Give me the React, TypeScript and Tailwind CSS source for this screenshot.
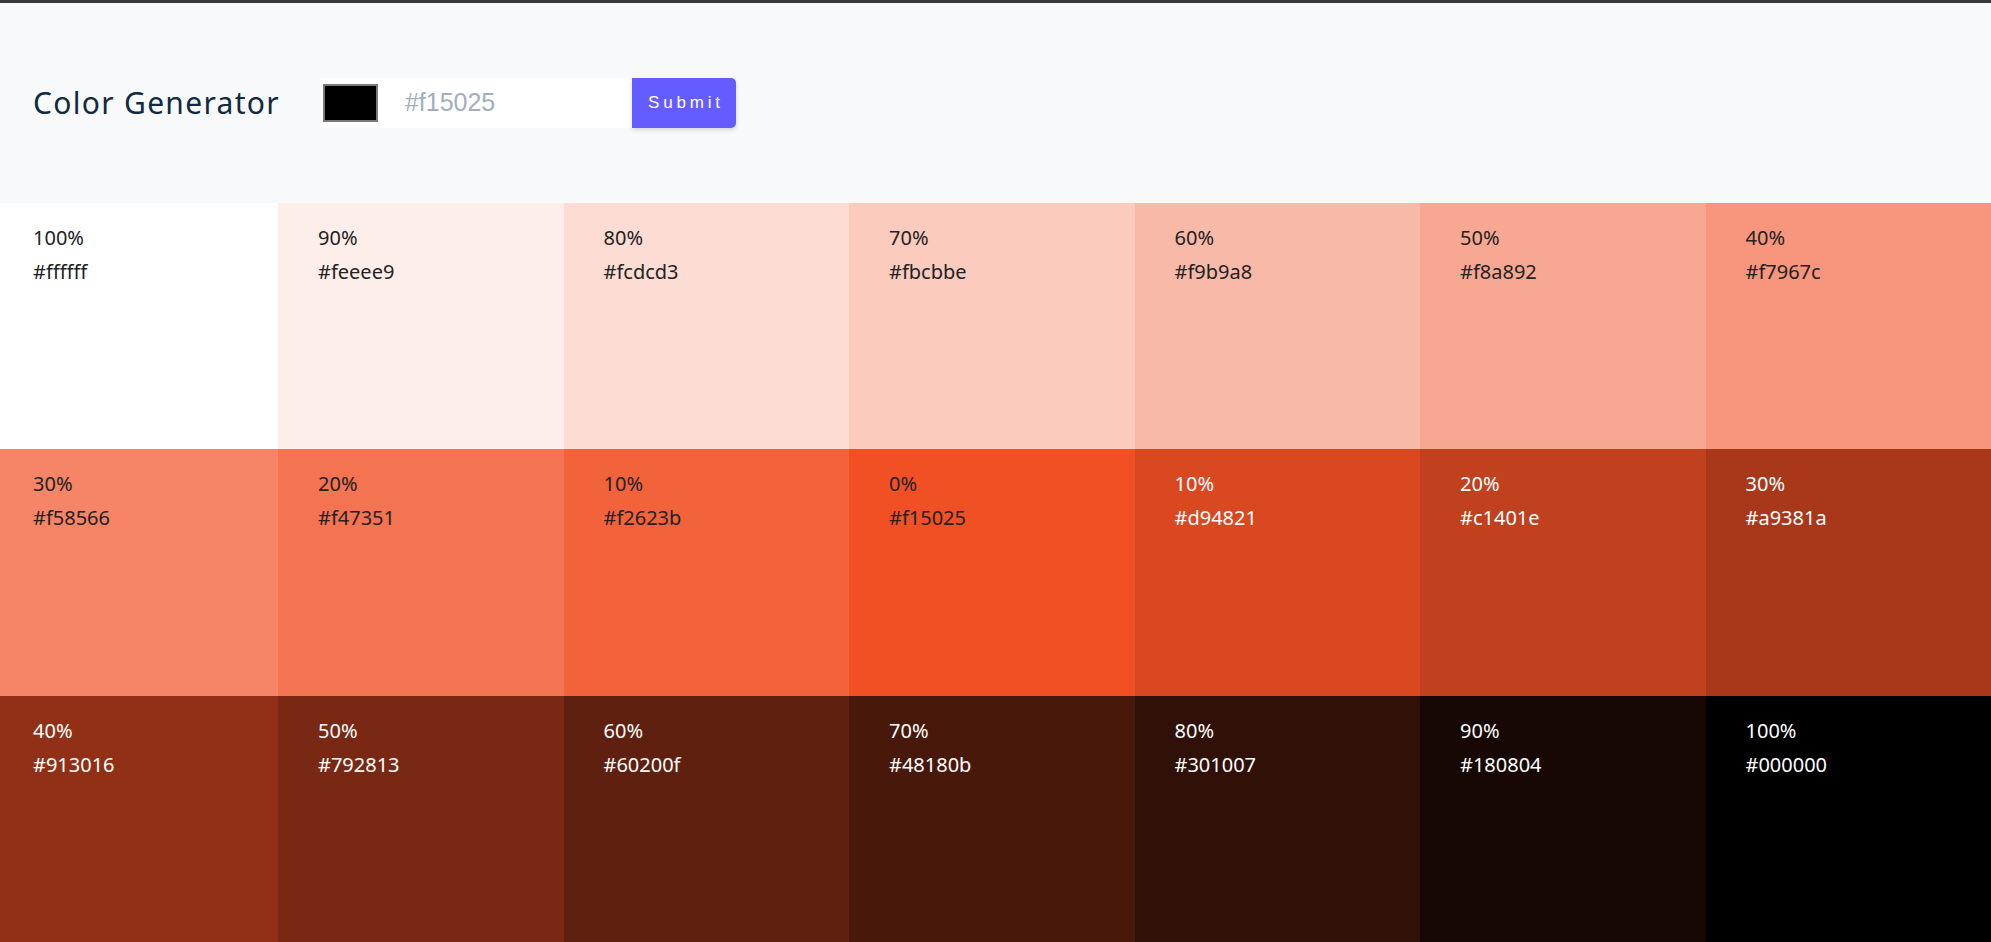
import React from "react";

const colors: { pct: string; hex: string; light: boolean }[] = [
  { pct: "100%", hex: "#ffffff", light: false },
  { pct: "90%", hex: "#feeee9", light: false },
  { pct: "80%", hex: "#fcdcd3", light: false },
  { pct: "70%", hex: "#fbcbbe", light: false },
  { pct: "60%", hex: "#f9b9a8", light: false },
  { pct: "50%", hex: "#f8a892", light: false },
  { pct: "40%", hex: "#f7967c", light: false },
  { pct: "30%", hex: "#f58566", light: false },
  { pct: "20%", hex: "#f47351", light: false },
  { pct: "10%", hex: "#f2623b", light: false },
  { pct: "0%", hex: "#f15025", light: false },
  { pct: "10%", hex: "#d94821", light: true },
  { pct: "20%", hex: "#c1401e", light: true },
  { pct: "30%", hex: "#a9381a", light: true },
  { pct: "40%", hex: "#913016", light: true },
  { pct: "50%", hex: "#792813", light: true },
  { pct: "60%", hex: "#60200f", light: true },
  { pct: "70%", hex: "#48180b", light: true },
  { pct: "80%", hex: "#301007", light: true },
  { pct: "90%", hex: "#180804", light: true },
  { pct: "100%", hex: "#000000", light: true },
];

export default function App() {
  return (
    <div
      className="flex h-[942px] w-full flex-col overflow-hidden"
      style={{ fontFamily: '"Noto Sans", "Open Sans", sans-serif' }}
    >
      <div className="h-[3px] w-full bg-[#3a3a3a]" />
      <header className="flex h-[200px] items-center bg-[#f8f9fb] pl-[33px]">
        <h3 className="mr-[40px] text-[30px] leading-none tracking-[1.3px] text-[#102a42]">
          Color Generator
        </h3>
        <form className="flex h-[50px] items-stretch" onSubmit={(e) => e.preventDefault()}>
          <div className="flex w-[58px] items-center bg-white pl-[3px]">
            <div className="h-[38px] w-[55px] border-2 border-[#7a7a7a] bg-black" />
          </div>
          <div
            className="flex w-[254px] items-center bg-white pl-[27px] text-[25px] text-[#a0aec0]"
            style={{ fontFamily: '"Liberation Sans", Arial, sans-serif' }}
          >
            #f15025
          </div>
          <button
            type="submit"
            className="flex w-[104px] items-center justify-center rounded-r-[5px] bg-[#645cff] pl-[4px] text-[17px] tracking-[3.8px] text-white shadow-[0_2px_4px_rgba(0,0,0,0.15)]"
            style={{ fontFamily: '"Liberation Sans", Arial, sans-serif' }}
          >
            Submit
          </button>
        </form>
      </header>
      <section className="grid flex-1 grid-cols-[278px_repeat(6,minmax(0,1fr))] grid-rows-3">
        {colors.map((c, i) => (
          <article
            key={i}
            className={`${i % 7 === 0 ? "pl-[33px]" : "pl-[40px]"} pt-[18px] text-[20px] leading-[34px] ${
              c.light ? "text-white" : "text-[#222222]"
            }`}
            style={{ backgroundColor: c.hex }}
          >
            <p>{c.pct}</p>
            <p>{c.hex}</p>
          </article>
        ))}
      </section>
    </div>
  );
}
